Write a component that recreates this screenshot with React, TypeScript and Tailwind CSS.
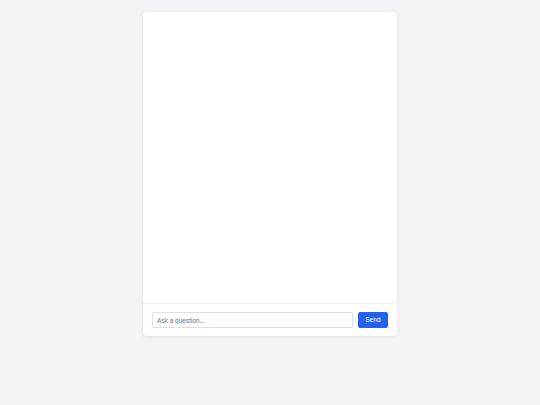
import React from 'react';

const App: React.FC = () => {
  return (
    <div
      className="min-h-[405px] w-full bg-[#f3f3f8] flex justify-center pt-[12px]"
      style={{ fontFamily: '"Liberation Sans", Arial, sans-serif' }}
    >
      <div className="w-[254px] h-[324px] bg-white rounded-[4px] shadow-[0_1px_4px_rgba(0,0,0,0.08)] flex flex-col">
        {/* Messages */}
        <div className="flex-1" />

        {/* Input bar */}
        <div className="border-t border-[#eceef1] px-[9px] pt-[8px] pb-[8px] flex items-center gap-[5px]">
          <input
            type="text"
            placeholder="Ask a question..."
            className="flex-1 min-w-0 h-[16px] border border-[#dcdfe4] rounded-[2px] px-[4px] text-[6.5px] text-gray-700 placeholder:text-[#6b7280] outline-none"
          />
          <button className="w-[30px] h-[16px] bg-[#2563eb] text-white text-[6.5px] rounded-[2px]">
            Send
          </button>
        </div>
      </div>
    </div>
  );
};

export default App;
